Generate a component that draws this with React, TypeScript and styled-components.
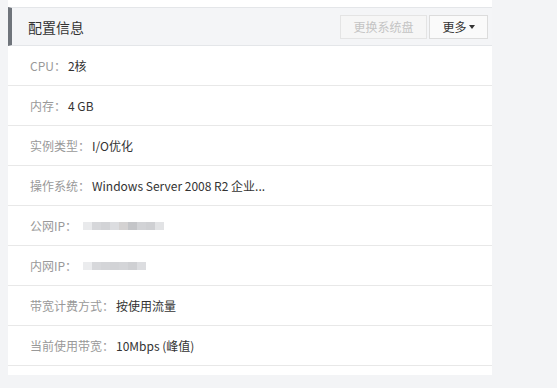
import React from "react";
import styled, { createGlobalStyle } from "styled-components";

const GlobalStyle = createGlobalStyle`
  html, body {
    margin: 0;
    padding: 0;
    background: #f3f4f6;
    font-family: "Microsoft YaHei", "Noto Sans CJK SC", sans-serif;
  }
`;

const Page = styled.div`
  width: 557px;
  height: 388px;
  overflow: hidden;
  padding-left: 8px;
  box-sizing: border-box;
`;

const Panel = styled.section`
  width: 484px;
  background: #fff;
  padding: 7px 0 9px;
`;

const Header = styled.header`
  display: flex;
  align-items: center;
  height: 37px;
  background: #f4f5f7;
  border-top: 1px solid #e4e6e9;
  border-bottom: 1px solid #e4e6e9;
  border-left: 4px solid #6f747b;
  padding: 0 4px 0 16px;
`;

const Title = styled.h3`
  flex: 1;
  margin: 0;
  font-size: 14px;
  font-weight: normal;
  color: #333;
`;

const Btn = styled.button<{ $disabled?: boolean }>`
  height: 24px;
  width: ${(p) => (p.$disabled ? "87px" : "59px")};
  padding: 0;
  margin-left: 2px;
  border: 1px solid ${(p) => (p.$disabled ? "#e4e4e4" : "#dcdcdc")};
  background: ${(p) => (p.$disabled ? "#f6f6f6" : "#fafafa")};
  color: ${(p) => (p.$disabled ? "#c4c4c4" : "#333")};
  font-family: inherit;
  font-size: 12px;
  display: flex;
  align-items: center;
  justify-content: center;
  gap: 2px;
`;

const Caret = styled.span`
  width: 0;
  height: 0;
  border-left: 3px solid transparent;
  border-right: 3px solid transparent;
  border-top: 4px solid #333;
`;

const Row = styled.div`
  display: flex;
  align-items: center;
  height: 39px;
  border-bottom: 1px solid #e8e8e8;
  padding-left: 22px;
  font-size: 12px;
`;

const Label = styled.span`
  color: #999;
`;

const Value = styled.span`
  color: #333;
  margin-left: 2px;
`;

const Blur = styled.span`
  display: flex;
  margin-left: 6px;
  filter: blur(0.6px);
`;

const Cell = styled.span<{ $c: string }>`
  width: 9px;
  height: 8px;
  background: ${(p) => p.$c};
`;

const publicIp = ["#e9eaec", "#d6d7da", "#d2d3d6", "#dcdde0", "#d4d2d2", "#c4c5c8", "#d2d3d6", "#cfd0d3", "#e2e3e5"];
const privateIp = ["#ebecee", "#d7d8db", "#d4d5d8", "#d2d3d6", "#d4d5d8", "#cfd0d3", "#dcdde0"];

const rows: { label: string; value?: string; ip?: string[] }[] = [
  { label: "CPU：", value: "2核" },
  { label: "内存：", value: "4 GB" },
  { label: "实例类型：", value: "I/O优化" },
  { label: "操作系统：", value: "Windows Server 2008 R2 企业..." },
  { label: "公网IP：", ip: publicIp },
  { label: "内网IP：", ip: privateIp },
  { label: "带宽计费方式：", value: "按使用流量" },
  { label: "当前使用带宽：", value: "10Mbps (峰值)" },
];

export default function App() {
  return (
    <Page>
      <GlobalStyle />
      <Panel>
        <Header>
          <Title>配置信息</Title>
          <Btn $disabled>更换系统盘</Btn>
          <Btn>
            更多
            <Caret />
          </Btn>
        </Header>
        {rows.map((r) => (
          <Row key={r.label}>
            <Label>{r.label}</Label>
            {r.ip ? (
              <Blur>
                {r.ip.map((c, i) => (
                  <Cell key={i} $c={c} />
                ))}
              </Blur>
            ) : (
              <Value>{r.value}</Value>
            )}
          </Row>
        ))}
      </Panel>
    </Page>
  );
}
